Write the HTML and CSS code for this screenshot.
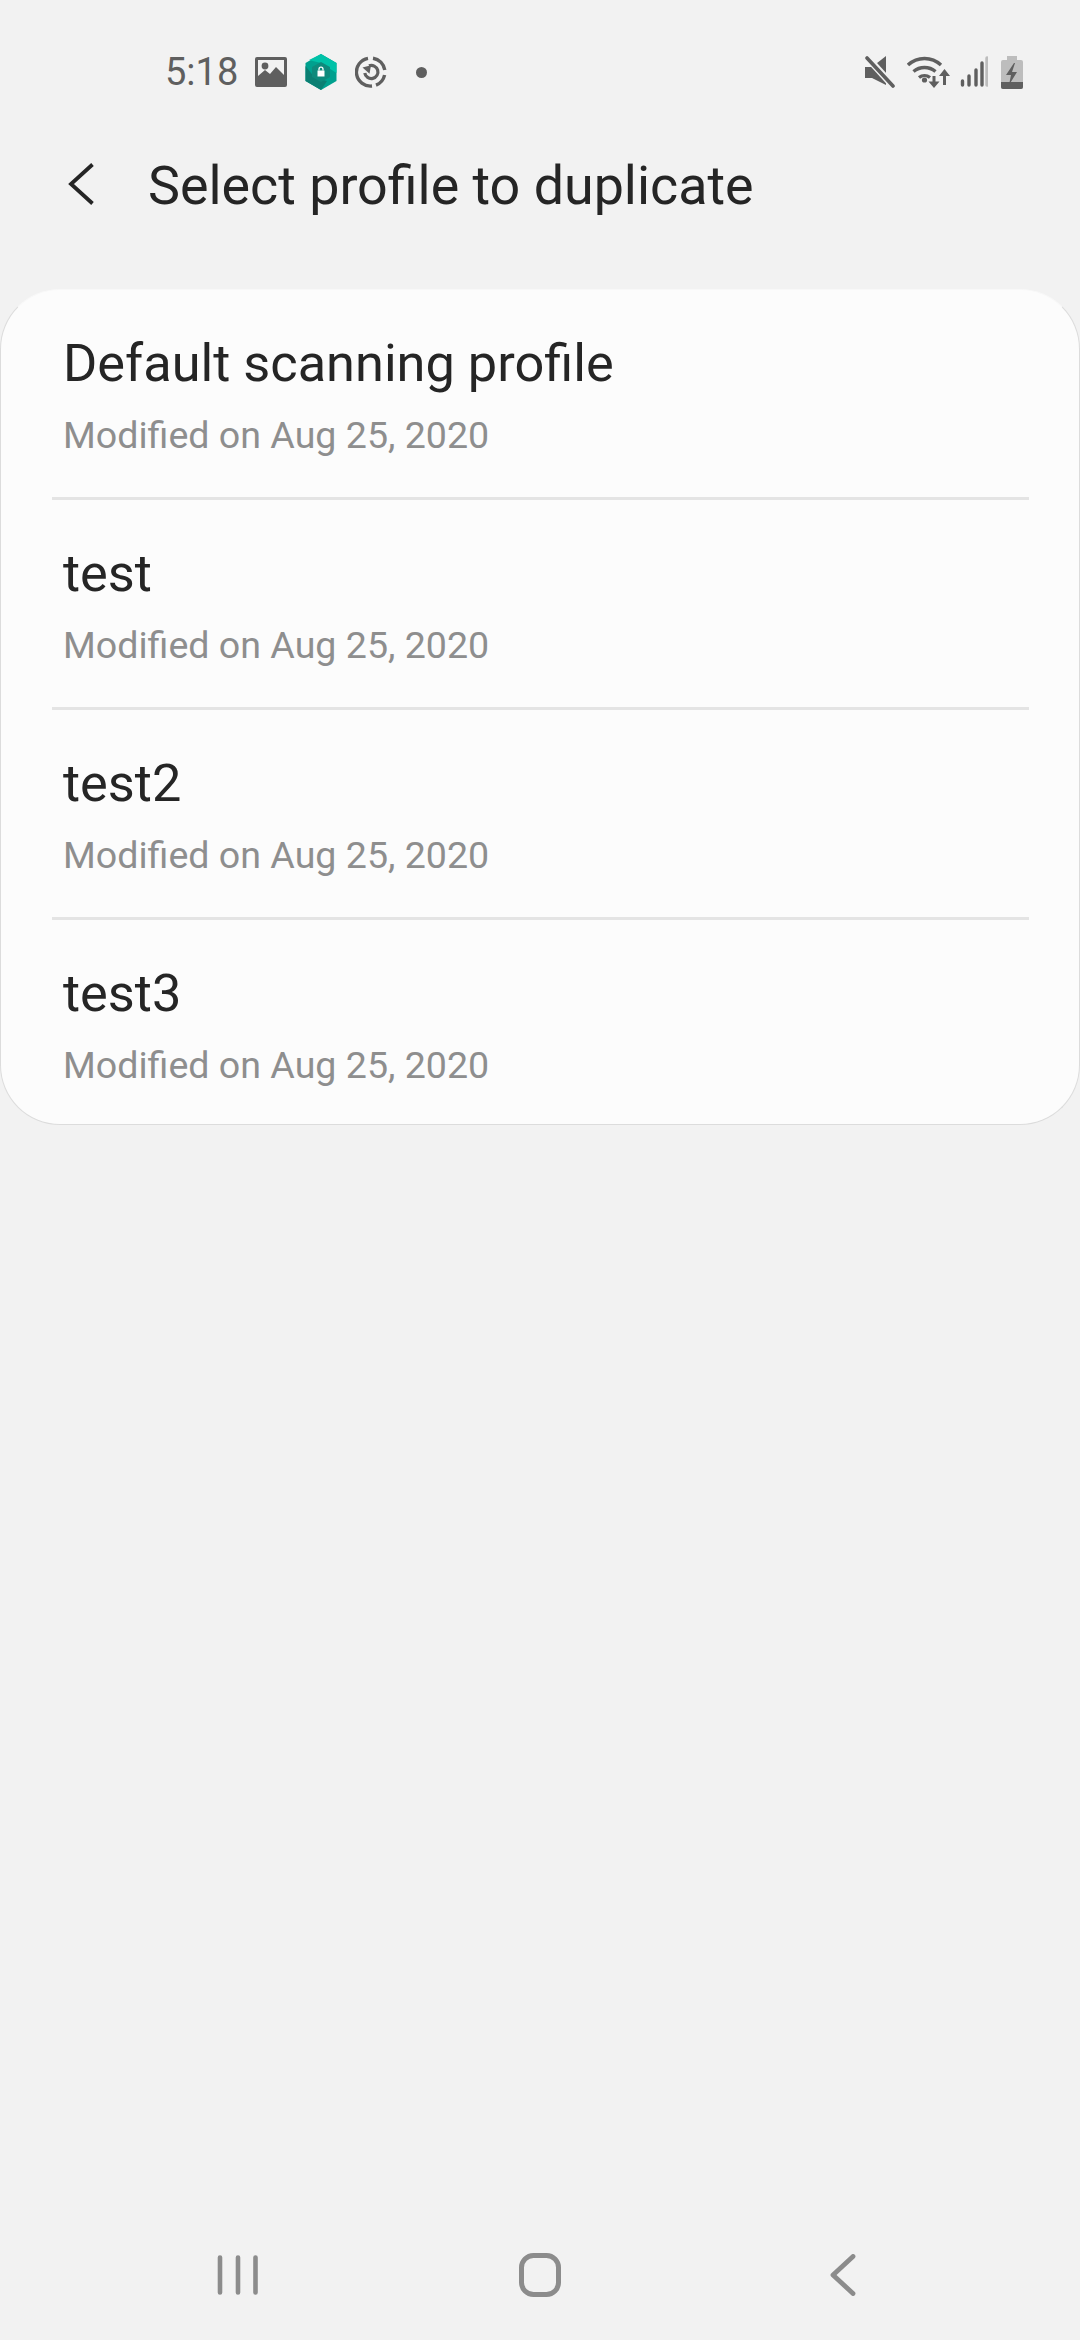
FILE: index.html
```html
<!DOCTYPE html>
<html lang="en">
<head>
  <meta charset="UTF-8">
  <title>Select profile to duplicate</title>
  <link rel="stylesheet" href="styles.css">
</head>
<body>
  <div class="screen">
    <div class="status">
      <div class="status-left">
        <span class="time">5:18</span>
        <svg class="ic-gallery" width="32" height="30" viewBox="0 0 32 30"><path fill="#5f5f5f" fill-rule="evenodd" d="M2 0h28a2 2 0 0 1 2 2v26a2 2 0 0 1-2 2H2a2 2 0 0 1-2-2V2a2 2 0 0 1 2-2zm1 3v16l7-6 5 4 6-7 8 8V3z"/><circle cx="10" cy="9" r="3.400" fill="#5f5f5f"/></svg>
        <svg class="ic-knox" width="32" height="36" viewBox="0 0 32 36"><path fill="#00a08e" d="M16 0l15.500 9v18L16 36 .5 27V9z"/><path fill="#00c2a8" d="M16 0l15.500 9v10L16 9 4 6z"/><path fill="#0b7f73" d="M.5 27V12L10 24l12 3-6 9z"/><path fill="#0e8a7c" d="M16 8l9 5v10l-9 5-9-5V13z"/><path fill="#fff" d="M12.500 16.500h7v6h-7z"/><path fill="none" stroke="#fff" stroke-width="1.300" d="M14 16.500v-1.300a2 2 0 0 1 4 0v1.300"/></svg>
        <svg class="ic-sync" width="32" height="32" viewBox="0 0 32 32"><g fill="none" stroke="#5f5f5f" stroke-width="3.400"><path d="M18 2.200A14 14 0 0 1 29.800 14"/><path d="M29.600 19A14 14 0 0 1 21 29.100"/><path d="M17 30A14 14 0 0 1 13 2.300"/><path stroke-width="3.200" d="M14 9.800A6.600 6.600 0 1 1 9.800 17"/></g><path fill="#5f5f5f" d="M7.500 11.500l8.500-2.200-1.500 8.500z"/></svg>
        <span class="dot"></span>
      </div>
      <div class="status-right">
        <svg class="ic-mute" width="30" height="34" viewBox="0 0 30 34"><path fill="#5f5f5f" d="M0 12h7L21 1v29L7 23H0z"/><path stroke="#f2f2f2" stroke-width="7" d="M0 0l30 33"/><path stroke="#5f5f5f" stroke-width="3.600" stroke-linecap="round" d="M2 3l26 28"/></svg>
        <svg class="ic-wifi" width="44" height="34" viewBox="0 0 44 34"><g fill="none" stroke="#5f5f5f" stroke-width="3.400"><path d="M1 10a24 24 0 0 1 33 0"/><path d="M6.500 16.500a17 17 0 0 1 22 0"/><path d="M12 22.500a9 9 0 0 1 11 0"/></g><circle cx="17.500" cy="25" r="2.600" fill="#5f5f5f"/><path stroke="#5f5f5f" stroke-width="3" d="M27 21v8M37.500 20v10"/><path fill="#5f5f5f" d="M21.500 26.500h11L27 33zM32 21h11l-5.500-7z"/></svg>
        <svg class="ic-signal" width="28" height="32" viewBox="0 0 28 32"><g stroke-width="3.400" stroke-linecap="round"><path stroke="#5f5f5f" d="M2.500 25v4M9 20v9M16 14v15M22 7v22"/><path stroke="#bdbdbd" d="M27 2v27"/></g></svg>
        <svg class="ic-battery" width="22" height="33" viewBox="0 0 22 33"><path fill="#bdbdbd" d="M6 0h10v4h4a2 2 0 0 1 2 2v25a2 2 0 0 1-2 2H2a2 2 0 0 1-2-2V6a2 2 0 0 1 2-2h4z"/><path fill="#5f5f5f" d="M0 26h22v5a2 2 0 0 1-2 2H2a2 2 0 0 1-2-2z"/><path fill="#5f5f5f" d="M13 7L5 19h5l-2 10 8-13h-5l3-9z"/></svg>
      </div>
    </div>

    <div class="appbar">
      <svg class="back" width="28" height="42" viewBox="0 0 28 42"><path fill="none" stroke="#252525" stroke-width="3.800" d="M26.500 1.500L5 21l21.500 19.500"/></svg>
      <h1 class="title">Select profile to duplicate</h1>
    </div>

    <div class="card">
      <div class="row">
        <div class="row-name">Default scanning profile</div>
        <div class="row-date">Modified on Aug 25, 2020</div>
      </div>
      <div class="row">
        <div class="row-name">test</div>
        <div class="row-date">Modified on Aug 25, 2020</div>
      </div>
      <div class="row">
        <div class="row-name">test2</div>
        <div class="row-date">Modified on Aug 25, 2020</div>
      </div>
      <div class="row">
        <div class="row-name">test3</div>
        <div class="row-date">Modified on Aug 25, 2020</div>
      </div>
    </div>

    <div class="navbar">
      <svg width="42" height="42" viewBox="0 0 42 42"><path stroke="#8c8c8c" stroke-width="4.600" stroke-linecap="round" d="M3 3.500v35M21 3.500v35M38.500 3.500v35"/></svg>
      <svg width="42" height="44" viewBox="0 0 42 44"><rect x="2.500" y="2.500" width="37" height="39" rx="12" fill="none" stroke="#8c8c8c" stroke-width="5"/></svg>
      <svg width="28" height="42" viewBox="0 0 28 42"><path fill="none" stroke="#8c8c8c" stroke-width="4.800" stroke-linecap="round" stroke-linejoin="round" d="M25 2.500L5 21l20 18.500"/></svg>
    </div>
  </div>
</body>
</html>
```

FILE: styles.css
```css
html, body {
  margin: 0;
  padding: 0;
}
body {
  font-family: Roboto, "Noto Sans", sans-serif;
  background: #f2f2f2;
}
.screen {
  width: 1080px;
  height: 2340px;
  display: flex;
  flex-direction: column;
  overflow: hidden;
  background: #f2f2f2;
}
.status {
  height: 72px;
  padding: 36px 57px 0 165px;
  display: flex;
  justify-content: space-between;
  align-items: flex-start;
  box-sizing: content-box;
}
.status-left, .status-right {
  display: flex;
  align-items: center;
  height: 72px;
}
.time {
  font-size: 38px;
  color: #5f5f5f;
  margin-right: 17px;
}
.ic-knox {
  margin-left: 18px;
}
.ic-sync {
  margin-left: 18px;
}
.dot {
  width: 11px;
  height: 11px;
  border-radius: 50%;
  background: #5f5f5f;
  margin-left: 29px;
}
.ic-wifi {
  margin-left: 12px;
}
.ic-signal {
  margin-left: 9px;
}
.ic-battery {
  margin-left: 13px;
}
.appbar {
  display: flex;
  align-items: center;
  height: 151px;
  padding-left: 66px;
}
.back {
  flex-shrink: 0;
}
.title {
  margin: 3px 0 0 54px;
  font-size: 53.8px;
  font-weight: 400;
  color: #252525;
}
.card {
  margin-top: 30px;
  background: #fcfcfc;
  border-radius: 60px;
  border: 1px solid #dcdcdc;
  border-top-color: #f8f8f8;
  box-sizing: border-box;
  height: 836px;
}
.row {
  height: 210px;
  box-sizing: border-box;
  margin: 0 50px 0 51px;
  padding: 43px 11px 0;
  border-bottom: 3px solid #e4e4e4;
}
.row:last-child {
  border-bottom: none;
}
.row-name {
  font-size: 52.3px;
  line-height: 60px;
  color: #252525;
}
.row-date {
  font-size: 37.6px;
  line-height: 44px;
  margin-top: 20px;
  color: #8e8e8e;
}
.navbar {
  margin-top: auto;
  height: 130px;
  display: grid;
  grid-template-columns: 1fr 1fr 1fr;
  justify-items: center;
  align-items: center;
  padding: 0 87px;
}
```
